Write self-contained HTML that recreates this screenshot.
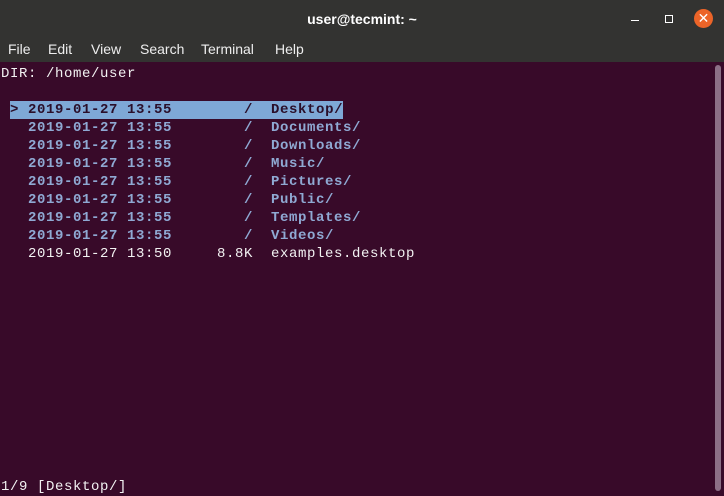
<!DOCTYPE html><html><head><style>
body{margin:0;width:724px;height:493px;overflow:hidden;background:#380a29;font-family:"Liberation Sans",sans-serif}
#title{position:absolute;left:0;top:0;width:724px;height:37px;background:#333331;color:#fff;font-weight:bold;font-size:14px;text-align:center;line-height:38px}
#menu{position:absolute;left:0;top:37px;width:724px;height:25px;background:#333331;color:#eee;font-size:14px;line-height:24px}
#menu span{position:absolute}
#term{position:absolute;left:1px;top:63px;font-family:"Liberation Mono",monospace;font-size:14px;letter-spacing:0.6px;color:#f2f2f2}
.l{height:18px;line-height:18px;white-space:pre}
.b{color:#8fa9d3;font-weight:bold}
.hl{background:#7ea8d6;color:#2a0f2a;display:inline-block;height:18px}
#sb{position:absolute;left:715px;top:65px;width:6px;height:426px;background:#8c6f86;border-radius:3px}
</style></head><body>
<div id="title">user@tecmint: ~</div>
<div style="position:absolute;left:631px;top:20px;width:8px;height:1px;background:#fff"></div>
<div style="position:absolute;left:665px;top:15px;width:6px;height:6px;border:1px solid #fff"></div>
<div style="position:absolute;left:694px;top:9px;width:19px;height:19px;border-radius:50%;background:#ec6428;color:#fff;font-size:14px;line-height:19px;text-align:center">✕</div>
<div id="menu"><span style="left:8px">File</span><span style="left:48px">Edit</span><span style="left:91px">View</span><span style="left:140px">Search</span><span style="left:201px">Terminal</span><span style="left:275px">Help</span></div>
<div id="term"><div class="l" style="margin-top:2px">DIR: /home/user</div><div class="l"> </div><div class="l b"> <span class="hl">> 2019-01-27 13:55        /  Desktop/</span></div><div class="l b">   2019-01-27 13:55        /  Documents/</div><div class="l b">   2019-01-27 13:55        /  Downloads/</div><div class="l b">   2019-01-27 13:55        /  Music/</div><div class="l b">   2019-01-27 13:55        /  Pictures/</div><div class="l b">   2019-01-27 13:55        /  Public/</div><div class="l b">   2019-01-27 13:55        /  Templates/</div><div class="l b">   2019-01-27 13:55        /  Videos/</div><div class="l">   2019-01-27 13:50     8.8K  examples.desktop</div></div>
<div style="position:absolute;left:1px;top:478px;font-family:'Liberation Mono',monospace;font-size:14px;letter-spacing:0.6px;color:#f2f2f2;white-space:pre;line-height:18px">1/9 [Desktop/]</div>
<div id="sb"></div>
</body></html>
